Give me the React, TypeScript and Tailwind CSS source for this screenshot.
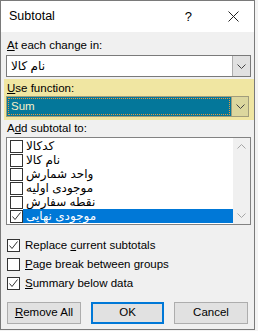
import React from "react";

const font = { fontFamily: '"Liberation Sans", "DejaVu Sans", sans-serif' };

function Chevron({ color = "#444" }: { color?: string }) {
  return (
    <svg width="9" height="5" viewBox="0 0 9 5">
      <path d="M0.5 0.5 L4.5 4.5 L8.5 0.5" fill="none" stroke={color} strokeWidth="1" />
    </svg>
  );
}

function Check() {
  return (
    <svg width="11" height="11" viewBox="0 0 11 11">
      <path d="M1.5 5.5 L4 8.5 L9.5 1.5" fill="none" stroke="#333" strokeWidth="1" />
    </svg>
  );
}

function Box({ checked = false }: { checked?: boolean }) {
  return (
    <div className="w-[13px] h-[13px] border border-[#333] bg-white flex items-center justify-center shrink-0">
      {checked && <Check />}
    </div>
  );
}

const fields = ["کدکالا", "نام کالا", "واحد شمارش", "موجودی اولیه", "نقطه سفارش", "موجودی نهایی"];

export default function App() {
  return (
    <div className="w-[258px] h-[331px] bg-[#f3f3f3] text-[11.5px] text-black" style={font}>
      <div className="w-[255px] h-[330px] border border-[#7a7a7a] bg-[#f0f0f0] flex flex-col">
        {/* title bar */}
        <div className="h-[31px] bg-white flex items-center shrink-0">
          <span className="pl-[8px] text-[12.5px]">Subtotal</span>
          <span className="ml-auto mr-[36px] text-[13px]">?</span>
          <svg width="11" height="11" viewBox="0 0 11 11" className="mr-[15px]">
            <path d="M0.5 0.5 L10.5 10.5 M10.5 0.5 L0.5 10.5" stroke="#222" strokeWidth="1" />
          </svg>
        </div>

        <div className="mt-[5px] h-[16px] leading-[16px] pl-[6px]">
          <u>A</u>t each change in:
        </div>
        <div className="mt-[2px] ml-[5px] w-[245px] h-[22px] border border-[#7a7a7a] bg-white flex">
          <div className="flex-1 pl-[4px] flex items-center text-[12px]">
            <span dir="auto">نام کالا</span>
          </div>
          <div className="w-[18px] bg-[#e1e1e1] border-l border-[#adadad] flex items-center justify-center">
            <Chevron />
          </div>
        </div>

        {/* highlighted row */}
        <div className="mt-[2px] ml-[3px] h-[41px] bg-[#f0e6a2] pt-[1px] pl-[2px] pr-[3px]">
          <div className="h-[16px] leading-[16px] pl-[1px]">
            <u>U</u>se function:
          </div>
          <div className="w-[243px] h-[21px] border border-[#a19d7b] flex">
            <div className="flex-1 bg-[#04779a] flex items-center p-[1px]">
              <div className="h-full w-full border border-dotted border-[#e89a3c] flex items-center pl-[2px] text-[#f7f0c8]">
                Sum
              </div>
            </div>
            <div className="w-[17px] bg-[#dcd79e] border-l border-[#a19d7b] flex items-center justify-center">
              <Chevron />
            </div>
          </div>
        </div>

        <div className="h-[16px] leading-[16px] pl-[6px]">
          A<u>d</u>d subtotal to:
        </div>
        <div className="mt-[1px] ml-[5px] w-[245px] h-[88px] border border-[#828282] bg-white flex">
          <div className="flex-1 pt-[1px]">
            {fields.map((f, i) => {
              const last = i === fields.length - 1;
              return (
                <div key={f} className="h-[14px] flex items-center pl-[3px]">
                  <Box checked={last} />
                  <div
                    className={`flex-1 h-[14px] flex items-center pl-[3px] text-[12px] ${
                      last ? "bg-[#0078d7] text-white" : ""
                    }`}
                  >
                    <span dir="auto">{f}</span>
                  </div>
                </div>
              );
            })}
          </div>
          <div className="w-[17px] bg-[#f0f0f0] flex flex-col items-center justify-between py-[6px]">
            <div className="rotate-180">
              <Chevron color="#a6a6a6" />
            </div>
            <Chevron color="#a6a6a6" />
          </div>
        </div>

        <div className="mt-[14px] flex flex-col gap-[6px] pl-[6px]">
          <label className="flex items-center gap-[5px] h-[13px]">
            <Box checked />
            <span>
              Replace <u>c</u>urrent subtotals
            </span>
          </label>
          <label className="flex items-center gap-[5px] h-[13px]">
            <Box />
            <span>
              <u>P</u>age break between groups
            </span>
          </label>
          <label className="flex items-center gap-[5px] h-[13px]">
            <Box checked />
            <span>
              <u>S</u>ummary below data
            </span>
          </label>
        </div>

        <div className="mt-[12px] pl-[6px] flex gap-[10px]">
          <button className="w-[74px] h-[22px] bg-[#e1e1e1] border border-[#adadad]">
            <u>R</u>emove All
          </button>
          <button className="w-[73px] h-[22px] bg-[#e1e1e1] border-2 border-[#0078d7]">OK</button>
          <button className="w-[74px] h-[22px] bg-[#e1e1e1] border border-[#adadad]">Cancel</button>
        </div>
      </div>
    </div>
  );
}
